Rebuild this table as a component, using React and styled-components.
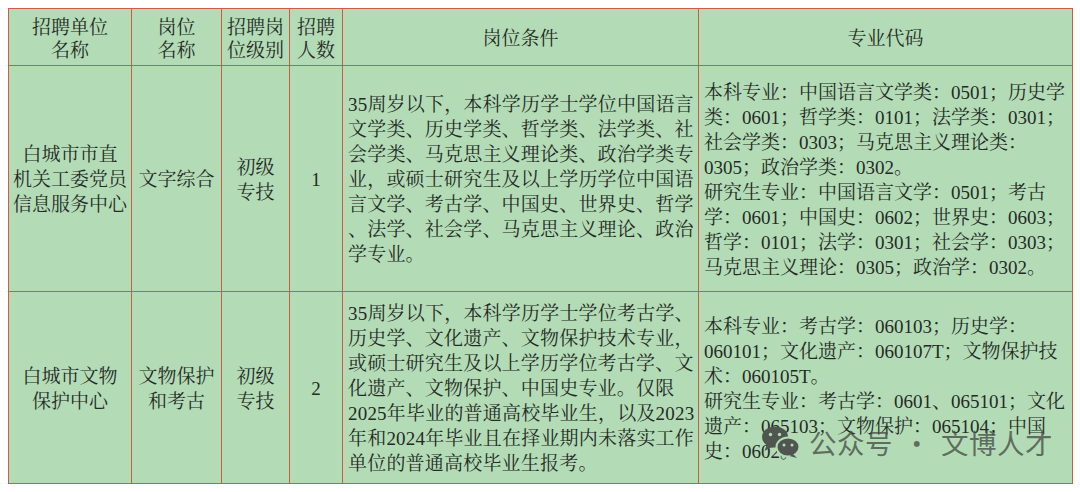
import React from "react";
import styled, { createGlobalStyle } from "styled-components";

const Global = createGlobalStyle`
  html, body { margin: 0; padding: 0; background: #ffffff; }
  body { padding: 8px; width: 1080px; height: 492px; box-sizing: border-box; overflow: hidden; }
`;

const Wrap = styled.div`
  position: relative;
  width: 1064px;
`;

const Table = styled.table`
  width: 1064px;
  table-layout: fixed;
  border-collapse: collapse;
  background: #b3dcb6;
  font-family: "Liberation Serif", "Noto Serif CJK SC", "Noto Sans CJK SC", serif;
  font-size: 19px;
  color: #262a26;
  border: 1.5px solid #c45a45;
`;

const HeadRow = styled.tr`
  height: 57px;
`;

const BodyRow = styled.tr`
  height: ${(p) => p.$h}px;
`;

const Cell = styled.td`
  border: 1px solid #cf5a45;
  padding: ${(p) => (p.$head ? "3px" : "2px")} ${(p) => (p.$wide ? 5 : 2)}px 0;
  vertical-align: middle;
  text-align: ${(p) => (p.$left ? "left" : "center")};
  line-height: ${(p) => (p.$head ? 23 : 25)}px;
  white-space: nowrap;
  overflow: hidden;
`;

const Line = styled.div`
  letter-spacing: ${(p) => (p.$spread ? "0.2px" : "0")};
`;

const Watermark = styled.div`
  position: absolute;
  left: 753px;
  top: 418px;
  display: flex;
  align-items: center;
  gap: 8px;
  white-space: nowrap;
  width: max-content;
  color: rgba(72, 78, 72, 0.8);
  font-family: "Noto Sans CJK SC", sans-serif;
  font-size: 27.5px;
  line-height: 32px;
  pointer-events: none;
`;

const WmText = styled.span`
  display: flex;
  align-items: center;
  white-space: nowrap;
  letter-spacing: 0.5px;
`;

const Dot = styled.span`
  margin: 0 10px;
`;

const header = [
  ["招聘单位", "名称"],
  ["岗位", "名称"],
  ["招聘岗", "位级别"],
  ["招聘", "人数"],
  ["岗位条件"],
  ["专业代码"],
];

const widths = [123, 90, 68, 53, 356, 374];

const rows = [
  {
    h: 226,
    unit: ["白城市市直", "机关工委党员", "信息服务中心"],
    post: ["文字综合"],
    level: ["初级", "专技"],
    count: "1",
    cond: [
      "35周岁以下，本科学历学士学位中国语言",
      "文学类、历史学类、哲学类、法学类、社",
      "会学类、马克思主义理论类、政治学类专",
      "业，或硕士研究生及以上学历学位中国语",
      "言文学、考古学、中国史、世界史、哲学",
      "、法学、社会学、马克思主义理论、政治",
      "学专业。",
    ],
    codes: [
      "本科专业：中国语言文学类：0501；历史学",
      "类：0601；哲学类：0101；法学类：0301；",
      "社会学类：0303；马克思主义理论类：",
      "0305；政治学类：0302。",
      "研究生专业：中国语言文学：0501；考古",
      "学：0601；中国史：0602；世界史：0603；",
      "哲学：0101；法学：0301；社会学：0303；",
      "马克思主义理论：0305；政治学：0302。",
    ],
  },
  {
    h: 192,
    unit: ["白城市文物", "保护中心"],
    post: ["文物保护", "和考古"],
    level: ["初级", "专技"],
    count: "2",
    cond: [
      "35周岁以下，本科学历学士学位考古学、",
      "历史学、文化遗产、文物保护技术专业，",
      "或硕士研究生及以上学历学位考古学、文",
      "化遗产、文物保护、中国史专业。仅限",
      "2025年毕业的普通高校毕业生，以及2023",
      "年和2024年毕业且在择业期内未落实工作",
      "单位的普通高校毕业生报考。",
    ],
    codes: [
      "本科专业：考古学：060103；历史学：",
      "060101；文化遗产：060107T；文物保护技",
      "术：060105T。",
      "研究生专业：考古学：0601、065101；文化",
      "遗产：065103；文物保护：065104；中国",
      "史：0602。",
    ],
  },
];

const Lines = ({ items, spread }) =>
  items.map((t, i) => (
    <Line key={i} $spread={spread}>
      {t}
    </Line>
  ));

const WeChatIcon = () => (
  <svg width="40" height="32" viewBox="0 0 40 32">
    <ellipse cx="14" cy="11" rx="13" ry="10.5" fill="#4f564f" />
    <path d="M6 18 L3.5 25 L12 20.5 Z" fill="#4f564f" />
    <circle cx="9.5" cy="8.5" r="1.7" fill="#b3dcb6" />
    <circle cx="18.5" cy="8.5" r="1.7" fill="#b3dcb6" />
    <ellipse cx="27" cy="21" rx="11.5" ry="9.5" fill="#4f564f" stroke="#b3dcb6" strokeWidth="2" />
    <path d="M32 28 L36 32 L28.5 30 Z" fill="#4f564f" />
    <circle cx="23" cy="19" r="1.5" fill="#b3dcb6" />
    <circle cx="31" cy="19" r="1.5" fill="#b3dcb6" />
  </svg>
);

export default function App() {
  return (
    <>
      <Global />
      <Wrap>
        <Table>
          <colgroup>
            {widths.map((w, i) => (
              <col key={i} style={{ width: w }} />
            ))}
          </colgroup>
          <tbody>
            <HeadRow>
              {header.map((h, i) => (
                <Cell key={i} $head>
                  <Lines items={h} />
                </Cell>
              ))}
            </HeadRow>
            {rows.map((r, i) => (
              <BodyRow key={i} $h={r.h}>
                <Cell>
                  <Lines items={r.unit} />
                </Cell>
                <Cell>
                  <Lines items={r.post} />
                </Cell>
                <Cell>
                  <Lines items={r.level} />
                </Cell>
                <Cell>{r.count}</Cell>
                <Cell $left $wide>
                  <Lines items={r.cond} spread />
                </Cell>
                <Cell $left $wide>
                  <Lines items={r.codes} />
                </Cell>
              </BodyRow>
            ))}
          </tbody>
        </Table>
        <Watermark>
          <WeChatIcon />
          <WmText>
            公众号<Dot>·</Dot>文博人才
          </WmText>
        </Watermark>
      </Wrap>
    </>
  );
}
